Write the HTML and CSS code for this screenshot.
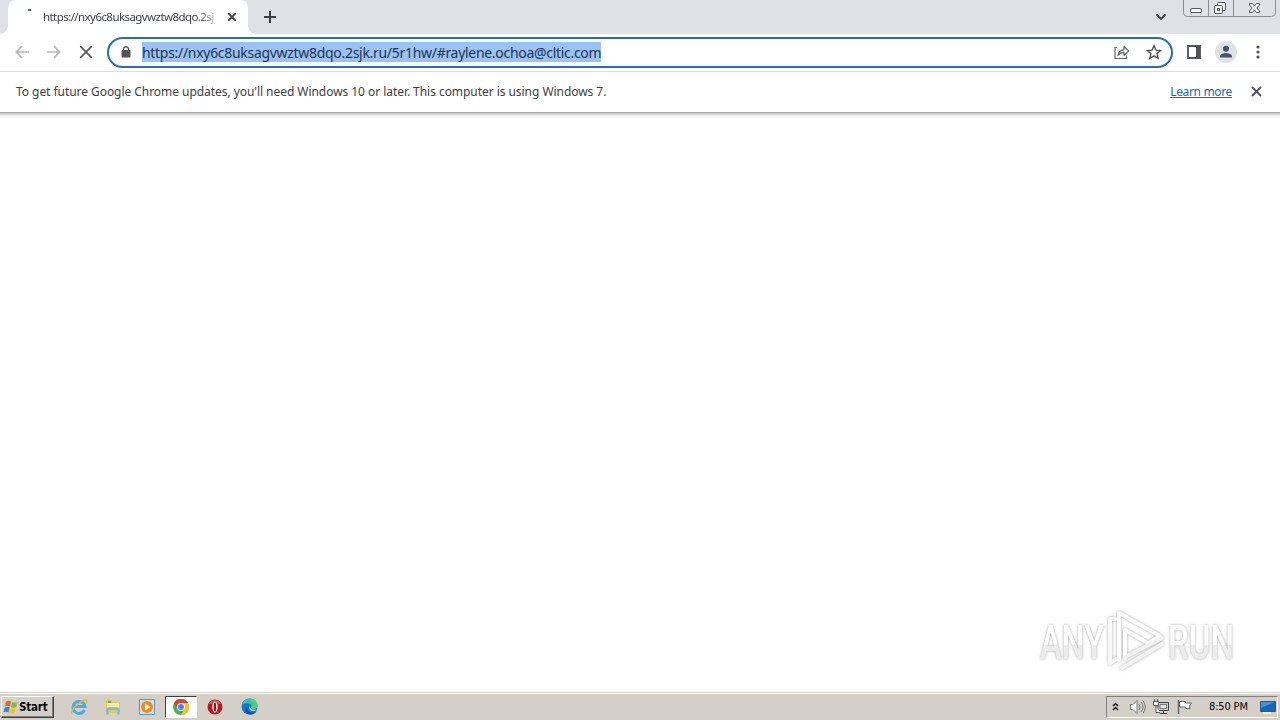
FILE: index.html
```html
<!DOCTYPE html>
<html lang="en">
<head>
    <meta charset="UTF-8">
    <meta name="viewport" content="width=device-width, initial-scale=1.0">
    <title>nxy6c8uksagvwztw8dqo.2sjk.ru</title>
    <link rel="stylesheet" href="styles.css">
</head>
<body>
    <div class="tabstrip">
        <div class="tab">
            <span class="spinner"></span>
            <span class="tab-title">https://nxy6c8uksagvwztw8dqo.2sj</span>
            <svg class="tab-close" width="10" height="10" viewBox="0 0 10 10"><path d="M1.2 1.2l7.6 7.6M8.8 1.2L1.2 8.8" stroke="#3c4043" stroke-width="1.8"/></svg>
        </div>
        <svg class="new-tab" width="14" height="14" viewBox="0 0 14 14"><path d="M7 1v12M1 7h12" stroke="#3c4043" stroke-width="2"/></svg>
        <svg class="tab-search" width="12" height="8" viewBox="0 0 12 8"><path d="M1.5 1.5L6 6l4.500-4.500" fill="none" stroke="#3c4043" stroke-width="1.800"/></svg>
        <svg class="window-buttons" width="94" height="17" viewBox="0 0 94 17">
            <path d="M.5 0v12.500q0 4 4 4h84q4 0 4-4V0M25.500 0v16.500M50.500 0v16.500" fill="none" stroke="#8b8e94"/>
            <g fill="#f4f5f7" stroke="#54575d">
                <rect x="7.500" y="8.500" width="11" height="4" rx="1.500"/>
                <rect x="34.500" y="2.500" width="8" height="8" rx="1"/>
                <rect x="31.500" y="5.500" width="8" height="8" rx="1"/>
                <rect x="34.500" y="8.500" width="2" height="2"/>
                <path d="M66.500 3.500h3l2 2.500 2-2.500h3v1.500L73.800 8l2.700 3v1.500h-3l-2-2.500-2 2.500h-3V11l2.700-3-2.700-3z"/>
            </g>
        </svg>
    </div>

    <div class="toolbar">
        <svg class="nav" width="14" height="14" viewBox="0 0 14 14"><path d="M14 7H1.500M7 1L1.300 7 7 13" fill="none" stroke="#b5b7ba" stroke-width="1.700"/></svg>
        <svg class="nav" width="14" height="14" viewBox="0 0 14 14"><path d="M0 7h12.500M7 1l5.700 6L7 13" fill="none" stroke="#b5b7ba" stroke-width="1.700"/></svg>
        <svg class="nav" width="14" height="14" viewBox="0 0 14 14"><path d="M1.200 1.200l11.600 11.600M12.800 1.200L1.200 12.800" stroke="#55585c" stroke-width="1.700"/></svg>
        <div class="omnibox">
            <svg class="lock" width="10" height="12" viewBox="0 0 10 12"><path d="M2.500 5V3.200a2.500 2.400 0 0 1 5 0V5" fill="none" stroke="#505357" stroke-width="1.300"/><rect x=".5" y="4" width="9" height="7.500" rx="1" fill="#505357"/></svg>
            <span class="url">https://nxy6c8uksagvwztw8dqo.2sjk.ru/5r1hw/#raylene.ochoa@cltic.com</span>
            <svg class="share" width="16" height="14" viewBox="0 0 16 14"><path d="M3 2.500H1v11h11.500V10.500" fill="none" stroke="#5f6368" stroke-width="1.200"/><path d="M4 10.500c.3-3.500 2-5.500 6-5.700V1.500l4.700 4.500-4.700 4.500V7.300C7.300 7.300 5.500 8.300 4 10.500z" fill="none" stroke="#5f6368" stroke-width="1.200" stroke-linejoin="round"/></svg>
            <svg class="star" width="16" height="16" viewBox="0 0 16 16"><path d="M8 1.700l1.900 4.400 4.800.4-3.700 3.100 1.200 4.700L8 11.800l-4.200 2.500L5 9.600 1.300 6.500l4.800-.4z" fill="none" stroke="#505357" stroke-width="1.400"/></svg>
        </div>
        <svg class="side-panel" width="14" height="14" viewBox="0 0 14 14"><path d="M1 1h12v12H1z" fill="none" stroke="#505357" stroke-width="1.800"/><path d="M9 1h4v12H9z" fill="#505357"/></svg>
        <svg class="avatar" width="22" height="22" viewBox="0 0 22 22"><circle cx="11" cy="11" r="11" fill="#dee1e6"/><circle cx="11" cy="7.700" r="3" fill="#47536d"/><path d="M5 16.500v-1.200c0-2.200 4-3.300 6-3.300s6 1.100 6 3.300v1.200z" fill="#47536d"/></svg>
        <svg class="kebab" width="4" height="14" viewBox="0 0 4 14" fill="#505357"><circle cx="2" cy="2" r="1.600"/><circle cx="2" cy="7" r="1.600"/><circle cx="2" cy="12" r="1.600"/></svg>
    </div>

    <div class="infobar">
        <span class="message">To get future Google Chrome updates, you'll need Windows 10 or later. This computer is using Windows 7.</span>
        <a class="learn-more">Learn more</a>
        <svg class="info-close" width="11" height="11" viewBox="0 0 11 11"><path d="M1 1l9 9M10 1l-9 9" stroke="#505357" stroke-width="1.900"/></svg>
    </div>

    <div class="page">
        <svg class="watermark" width="204" height="68" viewBox="0 0 204 68">
            <defs>
                <linearGradient id="fade" x1="0" y1="0" x2="0" y2="1">
                    <stop offset=".55" stop-color="#fff"/>
                    <stop offset=".55" stop-color="#ececec"/>
                </linearGradient>
            </defs>
            <g font-family="Roboto, sans-serif" font-size="49" font-weight="500" fill="url(#fade)">
                <text x="5" y="52" textLength="64" lengthAdjust="spacingAndGlyphs">ANY</text>
                <text x="133" y="52" textLength="66" lengthAdjust="spacingAndGlyphs">RUN</text>
            </g>
            <g fill="none" stroke-width="4" stroke-linejoin="round" stroke-linecap="round">
                <path d="M80 12h-5v44l6-4" stroke="#f8f8f8"/>
                <path d="M84 53V6l41 23-12 7-23-13v28" stroke="#fff"/>
                <path d="M90 50l37-19M87 61l40-24" stroke="#f2f2f2"/>
            </g>
        </svg>
    </div>

    <div class="taskbar">
        <div class="start">
            <svg width="16" height="16" viewBox="0 0 16 16"><path d="M3 2.500q2.500-1.500 5 0L7 7.500q-2.500-1.500-5 0z" fill="#e8642d"/><path d="M9 3q2.500 1.500 5.500 0l-1.300 5q-2.700 1.500-5.200 0z" fill="#83b93d"/><path d="M1.700 8.500q2.500-1.500 5 0l-1.200 5q-2.500-1.500-5 0z" fill="#3d87ce"/><path d="M7.700 9q2.500 1.500 5.300 0l-1.400 5q-2.600 1.500-5 0z" fill="#f5c22c"/></svg>
            <span>Start</span>
        </div>
        <div class="launcher">
            <div class="app"><svg width="18" height="18" viewBox="0 0 18 18"><path d="M14.500 12a6 6 0 1 1 .5-3.500H5" fill="none" stroke="#45aee6" stroke-width="3"/><path d="M2 16c-3-3 9-14 13.500-14 2 0 1.500 2 .8 3" fill="none" stroke="#e9b738" stroke-width="1.400"/></svg></div>
            <div class="app"><svg width="18" height="18" viewBox="0 0 18 18"><path d="M2 2h5l1 1.500h8V15H2z" fill="#e6c766"/><path d="M3 5h12v5H3z" fill="#fbeaa5"/><path d="M4 3h3v2H4z" fill="#65ae68"/><path d="M3.500 16.500v-4q0-2 2-2h7q2 0 2 2v4" fill="none" stroke="#79b9df" stroke-width="2.400"/></svg></div>
            <div class="app"><svg width="18" height="18" viewBox="0 0 18 18"><path d="M1.500 1.500h15v15h-15z" fill="#c8e1f3" stroke="#6594bd"/><circle cx="9" cy="9" r="6" fill="#f58a16"/><path d="M7 5.500l5.500 3.500L7 12.500z" fill="#fff"/></svg></div>
            <div class="app active"><svg width="16" height="16" viewBox="0 0 16 16"><circle cx="8" cy="8" r="8" fill="#4caf50"/><path d="M1.070 4A8 8 0 0 1 14.930 4H8L4.530 10z" fill="#e33b2e"/><path d="M14.930 4A8 8 0 0 1 8 16l3.500-6L8 4z" fill="#fbc116"/><circle cx="8" cy="8" r="4" fill="#fff"/><circle cx="8" cy="8" r="3" fill="#4285f4"/></svg></div>
            <div class="app"><svg width="16" height="16" viewBox="0 0 16 16"><circle cx="8" cy="8" r="7.500" fill="#bd1620"/><path d="M2 5a6.500 6.500 0 0 1 12 0z" fill="#d94b50"/><ellipse cx="8" cy="8" rx="2.700" ry="5.500" fill="#fff"/><ellipse cx="8" cy="8" rx="1.200" ry="4.700" fill="#a00e18"/></svg></div>
            <div class="app"><svg width="17" height="17" viewBox="0 0 17 17"><circle cx="8.500" cy="8.500" r="8" fill="#1976c9"/><path d="M.7 7C2-2 17-1 16.500 8c-.3 3-5 4-6.500 2 2-3-2-7-9.300-3z" fill="#36bfc0"/><path d="M9 .5c5 .2 8 4 7.500 7.500-.3 3-5 4-6.500 2 2-2 1-6-1-9.500z" fill="#54cf77"/><path d="M6 8q-1 5 4 6.500 3 .7 6-2-2 4-6.500 4.200Q2 15 6 8z" fill="#114e9c"/><path d="M9 7.500q-1 5 7 4-2 2-5 1.500-4-1-2-5.500z" fill="#d4d0c8"/></svg></div>
        </div>
        <div class="tray">
            <svg class="tray-arrow" width="7" height="9" viewBox="0 0 7 9"><path d="M1 4l2.500-2.500L6 4M1 8l2.500-2.500L6 8" fill="none" stroke="#000" stroke-width="1.300"/></svg>
            <svg class="speaker" width="17" height="16" viewBox="0 0 17 16"><path d="M1.500 5.500H4l4-4v13l-4-4H1.500z" fill="#fff" stroke="#777"/><path d="M10 5q2 3 0 6M12 3q4 5 0 10M14 1.500q4.500 6.500 0 13" fill="none" stroke="#777"/></svg>
            <svg class="network" width="16" height="16" viewBox="0 0 16 16"><path d="M5 3.500h10.500v8H5z" fill="#ccc" stroke="#444"/><path d="M7 5.500h6.500v4H7z" fill="#e4e4e4" stroke="#777"/><path d="M7 14.500h7M10.500 12v2" stroke="#444"/><path d="M.5 2.500h5v4h-5zM1.500 0v2M4.500 0v2M3 7v6.500h4" fill="#fff" stroke="#555"/></svg>
            <svg class="flag" width="16" height="16" viewBox="0 0 16 16"><path d="M2.500 2.500h6v1.500h6l-2 3 .5 2.500H8.500V8h-6z" fill="#fff" stroke="#666"/><path d="M1.500 1v14" stroke="#666" stroke-width="1.500"/></svg>
            <span class="clock">8:50 PM</span>
            <svg class="desktop" width="16" height="14" viewBox="0 0 16 14"><path d="M.5 1.500h15v10H.5z" fill="#1763b5" stroke="#305780"/><path d="M1 2h14L1 8z" fill="#4590db"/><path d="M3 13h8" stroke="#eee" stroke-width="2"/></svg>
        </div>
    </div>
</body>
</html>
```
FILE: styles.css
```css
* {
    box-sizing: border-box;
}

body {
    margin: 0;
    width: 1280px;
    height: 720px;
    overflow: hidden;
    display: flex;
    flex-direction: column;
    background: #fff;
    font-family: "Noto Sans", sans-serif;
    color: #3c3e42;
}

svg {
    display: block;
    flex: none;
}

/* ===== Tabs ===== */
.tabstrip {
    height: 34px;
    flex: none;
    display: flex;
    align-items: flex-start;
    background: #dee1e6;
}

.tab {
    position: relative;
    width: 240px;
    height: 34px;
    margin-left: 8px;
    padding-left: 20px;
    display: flex;
    align-items: center;
    background: #fff;
    border-radius: 8px 8px 0 0;
}

.tab::before,
.tab::after {
    content: '';
    position: absolute;
    bottom: 0;
    width: 8px;
    height: 8px;
}

.tab::before {
    left: -8px;
    background: radial-gradient(circle at 0 0, #dee1e6 7.5px, #fff 8px);
}

.tab::after {
    right: -8px;
    background: radial-gradient(circle at 100% 0, #dee1e6 7.5px, #fff 8px);
}

.spinner {
    width: 3px;
    height: 2px;
    margin-bottom: 14px;
    background: #4b5d8c;
}

.tab-title {
    width: 175px;
    height: 18px;
    margin-left: 12px;
    line-height: 17px;
    white-space: nowrap;
    font-size: 11.5px;
    letter-spacing: -0.57px;
    -webkit-mask-image: linear-gradient(90deg, #000 155px, transparent 180px);
    mask-image: linear-gradient(90deg, #000 155px, transparent 180px);
}

.tab-close {
    margin-left: 9px;
}

.new-tab {
    margin: 10px 0 0 15px;
}

.tab-search {
    margin: 13px 16px 0 auto;
}

.window-buttons {
    margin-right: 3px;
}

/* ===== Toolbar ===== */
.toolbar {
    height: 38px;
    flex: none;
    display: flex;
    align-items: center;
    padding: 0 20px 1px 15px;
    border-bottom: 1px solid #dcdde0;
}

.nav {
    margin-right: 18px;
}

.omnibox {
    width: 1066px;
    height: 31px;
    margin-left: -4px;
    padding: 0 9px 0 12px;
    display: flex;
    align-items: center;
    border: 2px solid #256bc5;
    border-radius: 16px;
}

.url {
    height: 20px;
    margin-left: 11px;
    line-height: 21px;
    white-space: nowrap;
    font-size: 14px;
    letter-spacing: -0.3px;
    color: #1d3550;
    background: #9ac2f5;
}

.share {
    margin-left: auto;
}

.star {
    margin-left: 16px;
}

.side-panel {
    margin-left: 14px;
}

.avatar {
    margin-left: 14px;
}

.kebab {
    margin-left: auto;
}

/* ===== Infobar ===== */
.infobar {
    height: 41px;
    flex: none;
    display: flex;
    align-items: center;
    padding: 0 18px 1px 16px;
    border-bottom: 1px solid #aaa;
    font-size: 12px;
}

.message {
    white-space: nowrap;
    letter-spacing: -0.05px;
}

.learn-more {
    margin-left: auto;
    letter-spacing: -0.35px;
    color: #1b68b5;
    text-decoration: underline;
}

.info-close {
    margin-left: 19px;
}

/* ===== Page ===== */
.page {
    flex: 1;
    display: flex;
    justify-content: flex-end;
    align-items: flex-end;
    padding: 0 41px 17px 0;
    background: linear-gradient(#bbb, #e9e9e9 2px, #fff 6px);
}

.watermark {
    overflow: visible;
    filter: drop-shadow(0 0 1.5px #aaa);
}

/* ===== Taskbar ===== */
.taskbar {
    height: 28px;
    flex: none;
    display: flex;
    align-items: center;
    padding: 2px 2px 2px 1px;
    background: #d4d0c8;
    border-top: 1px solid #d4d0c8;
    box-shadow: inset 0 1px #fff;
}

.start {
    width: 53px;
    height: 22px;
    display: flex;
    align-items: center;
    padding-left: 1px;
    border: 1px solid;
    border-color: #fff #404040 #404040 #fff;
    box-shadow: inset -1px -1px #808080;
    font-family: "DejaVu Sans Condensed", "DejaVu Sans", sans-serif;
    font-size: 11.5px;
    font-weight: bold;
    color: #000;
}

.start span {
    letter-spacing: -0.2px;
}

.launcher {
    display: flex;
    gap: 2px;
    margin-left: 9px;
}

.app {
    width: 32px;
    height: 22px;
    display: flex;
    align-items: center;
    justify-content: center;
}

.app.active {
    background: #fff;
    border: 1px solid;
    border-color: #404040 #fff #fff #404040;
}

.tray {
    width: 172px;
    height: 22px;
    margin-left: auto;
    display: flex;
    align-items: center;
    padding-left: 5px;
    border: 1px solid;
    border-color: #808080 #fff #fff #808080;
}

.speaker {
    margin-left: 10px;
}

.network {
    margin-left: 7px;
}

.flag {
    margin-left: 8px;
}

.clock {
    margin-left: 16px;
    width: 40px;
    white-space: nowrap;
    font-family: "DejaVu Sans Condensed", sans-serif;
    font-size: 11px;
    letter-spacing: -0.15px;
    color: #000;
}

.desktop {
    margin-left: 11px;
}
```
